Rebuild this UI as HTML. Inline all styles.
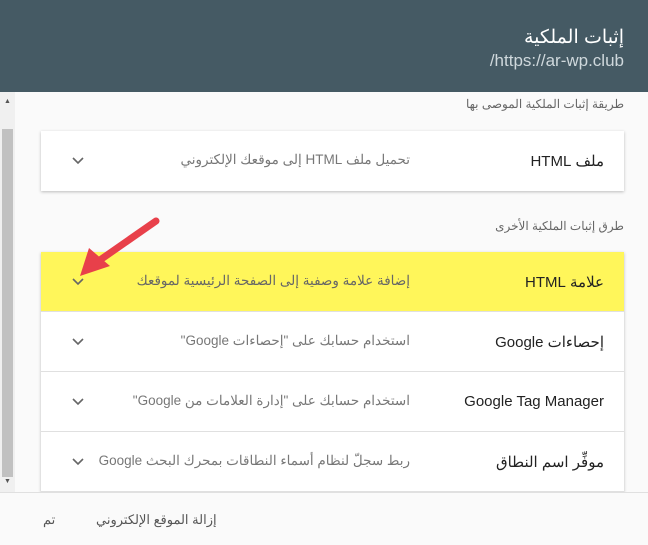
<!DOCTYPE html>
<html><head><meta charset="utf-8"><style>
*{margin:0;padding:0;box-sizing:border-box}
body{width:648px;height:545px;overflow:hidden;background:#fafafa;font-family:"Liberation Sans","Noto Sans CJK SC",sans-serif;position:relative}
.hdr{position:absolute;left:0;top:0;width:648px;height:92px;background:#455a64;color:#fff}
.hdr .t{position:absolute;right:24px;top:26px;font-size:19px}
.hdr .u{position:absolute;right:24px;top:51px;font-size:17px;color:#cfd8dc}
.sb{position:absolute;left:0;top:92px;width:15px;height:400px;background:#f0f0f0}
.sb .th{position:absolute;left:2px;top:37px;width:11px;height:348px;background:#c1c1c1}
.sb .a1{position:absolute;left:4px;top:6px;font-size:7px;color:#555}
.sb .a2{position:absolute;left:4px;top:386px;font-size:7px;color:#555}
.lbl{position:absolute;right:24px;font-size:12px;color:#666;direction:rtl}
.card{position:absolute;left:41px;width:583px;background:#fff;box-shadow:0 1px 3px rgba(0,0,0,.25)}
.row{position:relative;height:60px;border-bottom:1px solid #e0e0e0;direction:rtl}
.row .n{position:absolute;right:20px;top:21px;font-size:15px;color:#222}
.row .d{position:absolute;right:214px;top:21px;font-size:13.5px;color:#777}
.row .c{position:absolute;left:30px;top:22px;width:14px;height:14px}
.ftr{position:absolute;left:0;top:492px;width:648px;height:53px;background:#fafafa;border-top:1px solid #e0e0e0}
.ftr span{position:absolute;top:19px;font-size:13px;color:#555}
</style></head><body>
<div class="hdr"><div class="t">إثبات الملكية</div><div class="u">/https://ar-wp.club</div></div>
<div class="sb"><div class="a1">▲</div><div class="th"></div><div class="a2">▼</div></div>
<div class="lbl" style="top:97px">طريقة إثبات الملكية الموصى بها</div>
<div class="card" style="top:131px"><div class="row" style="border:none"><span class="n">ملف HTML</span><span class="d">تحميل ملف HTML إلى موقعك الإلكتروني</span><svg class="c" viewBox="0 0 14 14"><path d="M2 5l5 5 5-5" fill="none" stroke="#666" stroke-width="1.6"/></svg></div></div>
<div class="lbl" style="top:219px">طرق إثبات الملكية الأخرى</div>
<div class="card" style="top:252px">
<div class="row" style="background:#fff65a"><span class="n">علامة HTML</span><span class="d" style="color:#666">إضافة علامة وصفية إلى الصفحة الرئيسية لموقعك</span><svg class="c" viewBox="0 0 14 14"><path d="M2 5l5 5 5-5" fill="none" stroke="#666" stroke-width="1.6"/></svg></div>
<div class="row"><span class="n">إحصاءات Google</span><span class="d">استخدام حسابك على "إحصاءات Google"</span><svg class="c" viewBox="0 0 14 14"><path d="M2 5l5 5 5-5" fill="none" stroke="#666" stroke-width="1.6"/></svg></div>
<div class="row"><span class="n">Google Tag Manager</span><span class="d">استخدام حسابك على "إدارة العلامات من Google"</span><svg class="c" viewBox="0 0 14 14"><path d="M2 5l5 5 5-5" fill="none" stroke="#666" stroke-width="1.6"/></svg></div>
<div class="row"><span class="n">موفِّر اسم النطاق</span><span class="d">ربط سجلّ لنظام أسماء النطاقات بمحرك البحث Google</span><svg class="c" viewBox="0 0 14 14"><path d="M2 5l5 5 5-5" fill="none" stroke="#666" stroke-width="1.6"/></svg></div>
</div>
<svg style="position:absolute;left:0;top:0" width="648" height="545"><line x1="156" y1="221" x2="100" y2="260" stroke="#e8404a" stroke-width="7" stroke-linecap="round"/><polygon points="80,276 89,248 110,266" fill="#e8404a"/></svg>
<div class="ftr"><span style="left:96px">إزالة الموقع الإلكتروني</span><span style="left:43px">تم</span></div>
</body></html>
